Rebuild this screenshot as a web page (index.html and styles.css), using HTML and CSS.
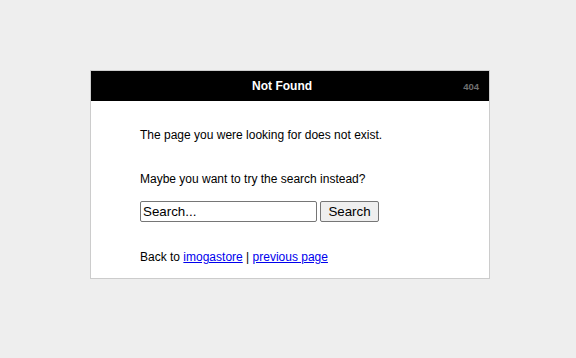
FILE: index.html
```html
<!DOCTYPE html>
<html lang="en">
<head>
    <meta charset="UTF-8">
    <title>Not Found</title>
    <link rel="stylesheet" href="styles.css">
</head>
<body>
    <div class="box">
        <div class="box-head">
            <h1>Not Found</h1>
            <span class="code">404</span>
        </div>
        <div class="box-body">
            <p class="msg">The page you were looking for does not exist.</p>
            <p class="msg hint">Maybe you want to try the search instead?</p>
            <form class="search" action="#" onsubmit="return false">
                <input class="search-input" type="text" name="q" value="Search...">
                <button class="search-button" type="submit">Search</button>
            </form>
            <p class="msg back">Back to <a href="#">imogastore</a> | <a href="#">previous page</a></p>
        </div>
    </div>
</body>
</html>
```

FILE: styles.css
```css
* {
    margin: 0;
    padding: 0;
    box-sizing: border-box;
}

body {
    font-family: "Liberation Sans", Arial, sans-serif;
    font-size: 12px;
    background: #eeeeee;
    color: #000;
}

.box {
    width: 400px;
    margin: 70px 0 0 90px;
    background: #fff;
    border: 1px solid #cccccc;
}

.box-head {
    display: flex;
    align-items: center;
    height: 30px;
    padding: 0 10px;
    background: #000;
    color: #fff;
}

.box-head h1 {
    flex: 1;
    text-align: center;
    font-size: 12px;
    font-weight: bold;
}

.code {
    font-size: 9.5px;
    font-weight: bold;
    color: #707070;
}

.box-body {
    padding: 26px 49px 13px;
}

.msg {
    line-height: 16px;
}

.hint {
    margin-top: 28px;
}

.search {
    display: flex;
    gap: 3px;
    margin-top: 14px;
}

.search-input,
.search-button {
    font-family: "Liberation Sans", Arial, sans-serif;
    font-size: 13.33px;
    height: 21px;
    color: #000;
    border: 1px solid #767676;
    border-radius: 2px;
}

.search-input {
    width: 177px;
    padding: 1px 2px;
    background: #fff;
}

.search-button {
    width: 59px;
    padding: 1px 6px;
    background: #efefef;
}

.back {
    margin-top: 27px;
}

.back a {
    color: #0000ee;
}
```
